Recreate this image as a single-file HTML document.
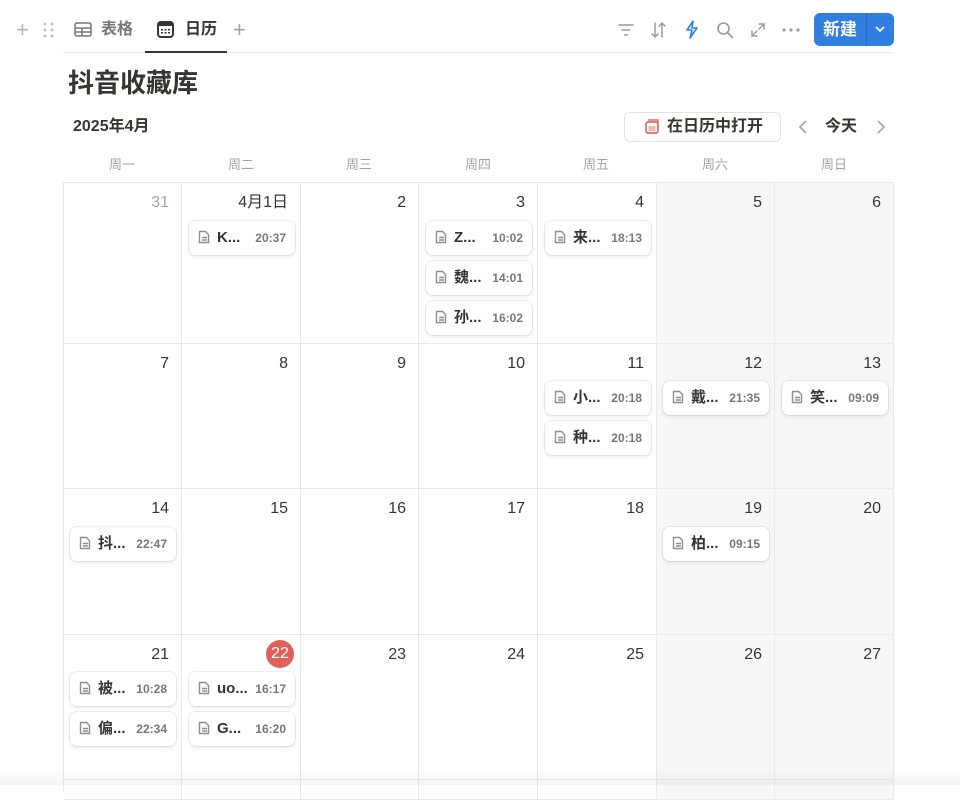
<!DOCTYPE html><html><head><meta charset="utf-8"><style>
*{box-sizing:border-box;margin:0;padding:0}
body{width:960px;height:785px;overflow:hidden;background:#fff;font-family:"Liberation Sans","Noto Sans CJK SC",sans-serif;color:#37352f;position:relative;line-height:1}
.a{position:absolute}
.cell{position:absolute;border-right:1px solid #e9e9e7;border-bottom:1px solid #e9e9e7}
.we{background:#f7f7f5}
.num{position:absolute;right:12px;top:12px;font-size:16px;color:#37352f}
.card{position:absolute;width:106px;height:34px;background:#fff;border-radius:7px;box-shadow:0 0 0 1px rgba(15,15,15,.07),0 2px 4px rgba(15,15,15,.08);font-size:15px;font-weight:bold}
.card svg{position:absolute;left:9px;top:9px}
.card .t{position:absolute;left:28px;top:9px;color:#37352f}
.card .tm{position:absolute;right:9px;top:11px;font-size:12px;color:#787774;font-weight:bold}
.wd{position:absolute;top:158px;font-size:13px;color:#a5a4a0;width:118px;text-align:center}
.ic{stroke:#8f8e8a;fill:none;stroke-width:1.4}
</style></head><body>
<div class="a" style="left:16px;top:19px;font-size:22px;color:#b5b4b0;font-weight:300">+</div>
<svg class="a" style="left:43px;top:22px" width="12" height="16"><g fill="#c4c3bf"><circle cx="2" cy="2" r="1.5"/><circle cx="9" cy="2" r="1.5"/><circle cx="2" cy="8" r="1.5"/><circle cx="9" cy="8" r="1.5"/><circle cx="2" cy="14" r="1.5"/><circle cx="9" cy="14" r="1.5"/></g></svg>
<svg class="a" style="left:74px;top:22px" width="18" height="15"><rect x="1" y="1" width="16" height="13" rx="2" fill="none" stroke="#787774" stroke-width="1.5"/><path d="M1 6h16M1 10h16M8 6v8" stroke="#787774" stroke-width="1.5"/></svg>
<div class="a" style="left:101px;top:22px;font-size:16px;color:#787774;font-weight:bold">表格</div>
<svg class="a" style="left:157px;top:21px" width="17" height="17"><rect x="1" y="1" width="15" height="15" rx="3" fill="none" stroke="#37352f" stroke-width="2"/><rect x="1" y="1" width="15" height="4" fill="#37352f"/><g fill="#37352f"><rect x="4" y="8" width="2" height="1.5"/><rect x="7.5" y="8" width="2" height="1.5"/><rect x="11" y="8" width="2" height="1.5"/><rect x="4" y="11" width="2" height="1.5"/><rect x="7.5" y="11" width="2" height="1.5"/><rect x="11" y="11" width="2" height="1.5"/></g></svg>
<div class="a" style="left:185px;top:22px;font-size:16px;color:#37352f;font-weight:bold">日历</div>
<div class="a" style="left:233px;top:19px;font-size:22px;color:#a5a4a0;font-weight:300">+</div>
<div class="a" style="left:63px;top:52px;width:830px;height:1px;background:#e9e9e7"></div>
<div class="a" style="left:145px;top:51px;width:82px;height:2px;background:#37352f"></div>
<svg class="a" style="left:617px;top:22px" width="18" height="16"><path d="M2 3h14M5 8h8M7.5 13h3" stroke="#9b9a97" stroke-width="1.5" stroke-linecap="round"/></svg>
<svg class="a" style="left:650px;top:21px" width="18" height="18"><path d="M5 2v14M2 13l3 3 3-3M12 16V2M9 5l3-3 3 3" stroke="#9b9a97" stroke-width="1.5" fill="none" stroke-linecap="round"/></svg>
<svg class="a" style="left:684px;top:20px" width="16" height="19"><path d="M9 1L3 10h5l-2 8 7-10H8z" fill="none" stroke="#2f7ee0" stroke-width="1.6" stroke-linejoin="round"/></svg>
<svg class="a" style="left:716px;top:21px" width="18" height="18"><circle cx="7.5" cy="7.5" r="5.5" stroke="#9b9a97" stroke-width="1.6" fill="none"/><path d="M11.5 11.5l5 5" stroke="#9b9a97" stroke-width="1.6" stroke-linecap="round"/></svg>
<svg class="a" style="left:750px;top:22px" width="16" height="16"><path d="M9 2h5v5M14 2L9 7M7 14H2V9M2 14l5-5" stroke="#9b9a97" stroke-width="1.5" fill="none" stroke-linecap="round"/></svg>
<svg class="a" style="left:782px;top:28px" width="18" height="4"><g fill="#9b9a97"><circle cx="2" cy="2" r="1.6"/><circle cx="9" cy="2" r="1.6"/><circle cx="16" cy="2" r="1.6"/></g></svg>
<div class="a" style="left:814px;top:13px;width:80px;height:33px;background:#2f7ee0;border-radius:6px;"></div>
<div class="a" style="left:866px;top:13px;width:1px;height:33px;background:#2768c0"></div>
<div class="a" style="left:823px;top:21px;font-size:17px;color:#fff;font-weight:bold">新建</div>
<svg class="a" style="left:874px;top:25px" width="12" height="9"><path d="M2 2l4 4 4-4" stroke="#fff" stroke-width="1.8" fill="none"/></svg>
<div class="a" style="left:68px;top:70px;font-size:26px;font-weight:bold;color:#37352f">抖音收藏库</div>
<div class="a" style="left:73px;top:119px;font-size:16px;font-weight:bold;color:#37352f">2025年4月</div>
<div class="a" style="left:624px;top:112px;width:157px;height:30px;border:1px solid #e3e2df;border-radius:6px"></div>
<svg class="a" style="left:645px;top:119px" width="14" height="15"><rect x="1" y="3" width="12" height="11" rx="2" fill="none" stroke="#d9534a" stroke-width="1.4"/><path d="M3 1h10v10" fill="none" stroke="#d9534a" stroke-width="1.2"/><rect x="3.5" y="7" width="7" height="5" fill="#f0b7b2"/></svg>
<div class="a" style="left:667px;top:119px;font-size:16px;font-weight:bold;color:#37352f">在日历中打开</div>
<svg class="a" style="left:798px;top:119px" width="10" height="16"><path d="M8 2L2 8l6 6" stroke="#a5a4a0" stroke-width="1.6" fill="none"/></svg>
<div class="a" style="left:825px;top:119px;font-size:16px;font-weight:bold;color:#37352f">今天</div>
<svg class="a" style="left:876px;top:119px" width="10" height="16"><path d="M2 2l6 6-6 6" stroke="#a5a4a0" stroke-width="1.6" fill="none"/></svg>
<div class="wd" style="left:63px">周一</div><div class="wd" style="left:182px">周二</div><div class="wd" style="left:300px">周三</div><div class="wd" style="left:419px">周四</div><div class="wd" style="left:537px">周五</div><div class="wd" style="left:656px">周六</div><div class="wd" style="left:775px">周日</div>
<div class="a" style="left:63px;top:182px;width:830px;height:1px;background:#e9e9e7"></div>
<div class="a" style="left:63px;top:182px;width:1px;height:610px;background:#e9e9e7"></div>
<div class="cell" style="left:64px;top:183px;width:118px;height:161px"><span class="num" style="color:#a5a4a0">31</span></div>
<div class="cell" style="left:182px;top:183px;width:119px;height:161px"><span class="num">4月1日</span></div>
<div class="cell" style="left:301px;top:183px;width:118px;height:161px"><span class="num">2</span></div>
<div class="cell" style="left:419px;top:183px;width:119px;height:161px"><span class="num">3</span></div>
<div class="cell" style="left:538px;top:183px;width:119px;height:161px"><span class="num">4</span></div>
<div class="cell we" style="left:657px;top:183px;width:118px;height:161px"><span class="num">5</span></div>
<div class="cell we" style="left:775px;top:183px;width:119px;height:161px"><span class="num">6</span></div>
<div class="cell" style="left:64px;top:344px;width:118px;height:145px"><span class="num">7</span></div>
<div class="cell" style="left:182px;top:344px;width:119px;height:145px"><span class="num">8</span></div>
<div class="cell" style="left:301px;top:344px;width:118px;height:145px"><span class="num">9</span></div>
<div class="cell" style="left:419px;top:344px;width:119px;height:145px"><span class="num">10</span></div>
<div class="cell" style="left:538px;top:344px;width:119px;height:145px"><span class="num">11</span></div>
<div class="cell we" style="left:657px;top:344px;width:118px;height:145px"><span class="num">12</span></div>
<div class="cell we" style="left:775px;top:344px;width:119px;height:145px"><span class="num">13</span></div>
<div class="cell" style="left:64px;top:489px;width:118px;height:146px"><span class="num">14</span></div>
<div class="cell" style="left:182px;top:489px;width:119px;height:146px"><span class="num">15</span></div>
<div class="cell" style="left:301px;top:489px;width:118px;height:146px"><span class="num">16</span></div>
<div class="cell" style="left:419px;top:489px;width:119px;height:146px"><span class="num">17</span></div>
<div class="cell" style="left:538px;top:489px;width:119px;height:146px"><span class="num">18</span></div>
<div class="cell we" style="left:657px;top:489px;width:118px;height:146px"><span class="num">19</span></div>
<div class="cell we" style="left:775px;top:489px;width:119px;height:146px"><span class="num">20</span></div>
<div class="cell" style="left:64px;top:635px;width:118px;height:145px"><span class="num">21</span></div>
<div class="cell" style="left:182px;top:635px;width:119px;height:145px"><span class="num" style="right:6px;top:5px;width:28px;height:28px;border-radius:14px;background:#e0605a;color:#fff;text-align:center;line-height:28px">22</span></div>
<div class="cell" style="left:301px;top:635px;width:118px;height:145px"><span class="num">23</span></div>
<div class="cell" style="left:419px;top:635px;width:119px;height:145px"><span class="num">24</span></div>
<div class="cell" style="left:538px;top:635px;width:119px;height:145px"><span class="num">25</span></div>
<div class="cell we" style="left:657px;top:635px;width:118px;height:145px"><span class="num">26</span></div>
<div class="cell we" style="left:775px;top:635px;width:119px;height:145px"><span class="num">27</span></div>
<div class="cell" style="left:64px;top:780px;width:118px;height:20px"></div><div class="cell" style="left:182px;top:780px;width:119px;height:20px"></div><div class="cell" style="left:301px;top:780px;width:118px;height:20px"></div><div class="cell" style="left:419px;top:780px;width:119px;height:20px"></div><div class="cell" style="left:538px;top:780px;width:119px;height:20px"></div><div class="cell we" style="left:657px;top:780px;width:118px;height:20px"></div><div class="cell we" style="left:775px;top:780px;width:119px;height:20px"></div>
<div class="a" style="left:0;top:768px;width:960px;height:17px;background:linear-gradient(rgba(0,0,0,0),rgba(0,0,0,.04))"></div>
<div class="card" style="left:189px;top:221px"><svg width="12" height="14"><path class="ic" d="M1.5 1.5h6l3 3v8h-9z M4 7.5h5M4 10h5"/></svg><span class="t">K...</span><span class="tm">20:37</span></div>
<div class="card" style="left:426px;top:221px"><svg width="12" height="14"><path class="ic" d="M1.5 1.5h6l3 3v8h-9z M4 7.5h5M4 10h5"/></svg><span class="t">Z...</span><span class="tm">10:02</span></div>
<div class="card" style="left:426px;top:261px"><svg width="12" height="14"><path class="ic" d="M1.5 1.5h6l3 3v8h-9z M4 7.5h5M4 10h5"/></svg><span class="t">魏...</span><span class="tm">14:01</span></div>
<div class="card" style="left:426px;top:301px"><svg width="12" height="14"><path class="ic" d="M1.5 1.5h6l3 3v8h-9z M4 7.5h5M4 10h5"/></svg><span class="t">孙...</span><span class="tm">16:02</span></div>
<div class="card" style="left:545px;top:221px"><svg width="12" height="14"><path class="ic" d="M1.5 1.5h6l3 3v8h-9z M4 7.5h5M4 10h5"/></svg><span class="t">来...</span><span class="tm">18:13</span></div>
<div class="card" style="left:545px;top:381px"><svg width="12" height="14"><path class="ic" d="M1.5 1.5h6l3 3v8h-9z M4 7.5h5M4 10h5"/></svg><span class="t">小...</span><span class="tm">20:18</span></div>
<div class="card" style="left:545px;top:421px"><svg width="12" height="14"><path class="ic" d="M1.5 1.5h6l3 3v8h-9z M4 7.5h5M4 10h5"/></svg><span class="t">种...</span><span class="tm">20:18</span></div>
<div class="card" style="left:663px;top:381px"><svg width="12" height="14"><path class="ic" d="M1.5 1.5h6l3 3v8h-9z M4 7.5h5M4 10h5"/></svg><span class="t">戴...</span><span class="tm">21:35</span></div>
<div class="card" style="left:782px;top:381px"><svg width="12" height="14"><path class="ic" d="M1.5 1.5h6l3 3v8h-9z M4 7.5h5M4 10h5"/></svg><span class="t">笑...</span><span class="tm">09:09</span></div>
<div class="card" style="left:70px;top:527px"><svg width="12" height="14"><path class="ic" d="M1.5 1.5h6l3 3v8h-9z M4 7.5h5M4 10h5"/></svg><span class="t">抖...</span><span class="tm">22:47</span></div>
<div class="card" style="left:663px;top:527px"><svg width="12" height="14"><path class="ic" d="M1.5 1.5h6l3 3v8h-9z M4 7.5h5M4 10h5"/></svg><span class="t">柏...</span><span class="tm">09:15</span></div>
<div class="card" style="left:70px;top:672px"><svg width="12" height="14"><path class="ic" d="M1.5 1.5h6l3 3v8h-9z M4 7.5h5M4 10h5"/></svg><span class="t">被...</span><span class="tm">10:28</span></div>
<div class="card" style="left:70px;top:712px"><svg width="12" height="14"><path class="ic" d="M1.5 1.5h6l3 3v8h-9z M4 7.5h5M4 10h5"/></svg><span class="t">偏...</span><span class="tm">22:34</span></div>
<div class="card" style="left:189px;top:672px"><svg width="12" height="14"><path class="ic" d="M1.5 1.5h6l3 3v8h-9z M4 7.5h5M4 10h5"/></svg><span class="t">uo...</span><span class="tm">16:17</span></div>
<div class="card" style="left:189px;top:712px"><svg width="12" height="14"><path class="ic" d="M1.5 1.5h6l3 3v8h-9z M4 7.5h5M4 10h5"/></svg><span class="t">G...</span><span class="tm">16:20</span></div>
</body></html>
